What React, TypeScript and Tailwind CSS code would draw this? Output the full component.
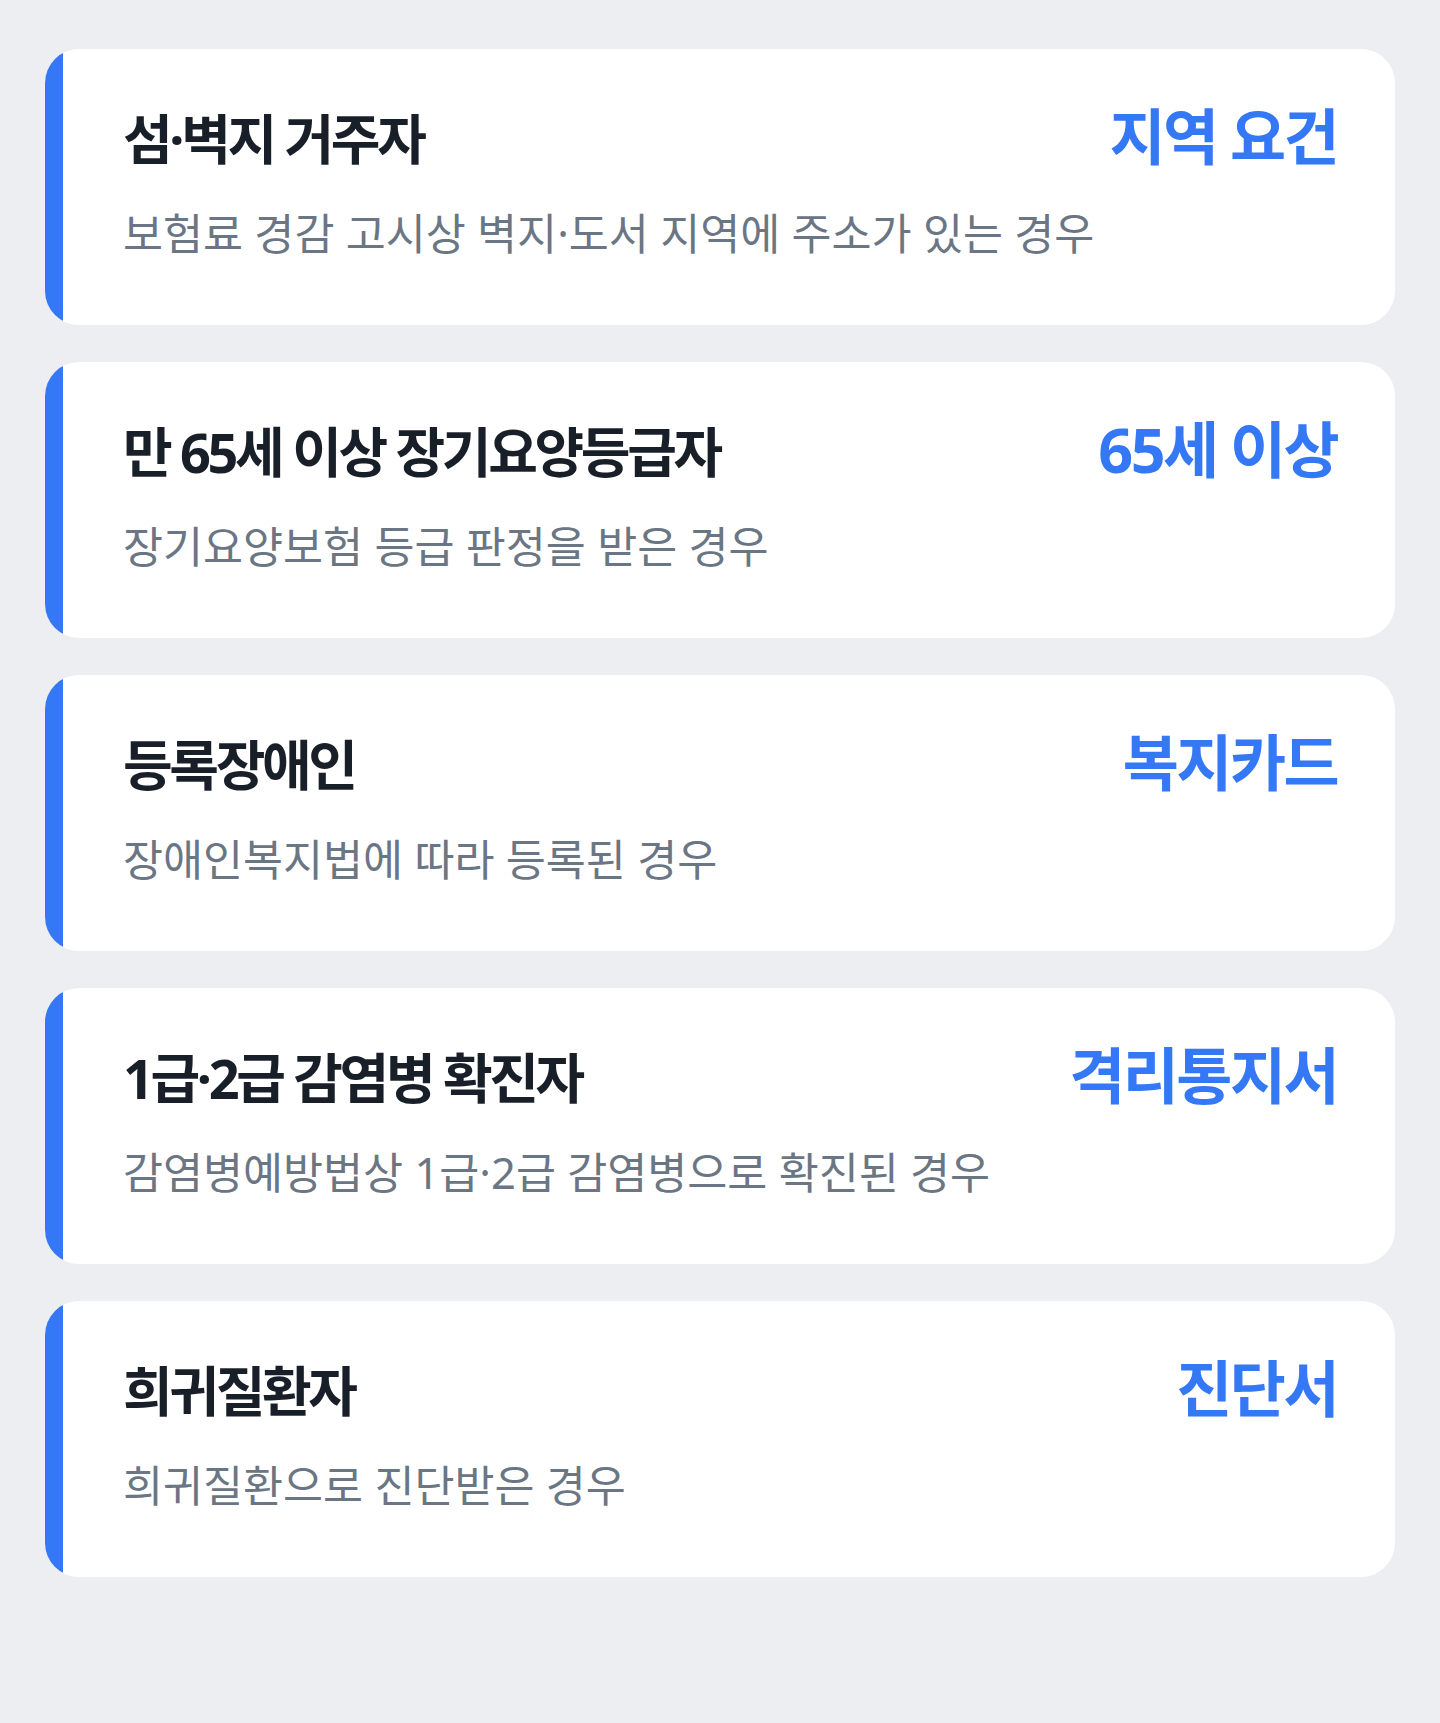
const items = [
  {
    title: "섬·벽지 거주자",
    tag: "지역 요건",
    desc: "보험료 경감 고시상 벽지·도서 지역에 주소가 있는 경우",
  },
  {
    title: "만 65세 이상 장기요양등급자",
    tag: "65세 이상",
    desc: "장기요양보험 등급 판정을 받은 경우",
  },
  {
    title: "등록장애인",
    tag: "복지카드",
    desc: "장애인복지법에 따라 등록된 경우",
  },
  {
    title: "1급·2급 감염병 확진자",
    tag: "격리통지서",
    desc: "감염병예방법상 1급·2급 감염병으로 확진된 경우",
  },
  {
    title: "희귀질환자",
    tag: "진단서",
    desc: "희귀질환으로 진단받은 경우",
  },
];

function EligibilityCard({ title, tag, desc }: { title: string; tag: string; desc: string }) {
  return (
    <div className="flex h-[276px] overflow-hidden rounded-[34px] bg-white">
      {/* Accent bar */}
      <div className="w-[18px] shrink-0 bg-[#3478f6]" aria-hidden />
      <div className="flex flex-1 flex-col justify-center pl-[60px] pr-[58px] pb-[12px]">
        <div className="flex items-baseline justify-between">
          <h3 className="text-[54px] font-bold leading-[64px] tracking-[-0.062em] text-[#191f28]">
            {title}
          </h3>
          <span className="text-[61px] font-bold leading-[64px] tracking-[-0.042em] text-[#3478f6]">
            {tag}
          </span>
        </div>
        <p className="mt-[37px] text-[43.5px] leading-[50px] text-[#6b7684]">{desc}</p>
      </div>
    </div>
  );
}

export default function App() {
  return (
    <div
      className="min-h-screen bg-[#eceef2] px-[45px] pt-[49px] pb-[146px]"
      style={{ fontFamily: '"Noto Sans", "Noto Sans CJK KR", sans-serif' }}
    >
      <div className="flex flex-col gap-[37px]">
        {items.map((item) => (
          <EligibilityCard key={item.title} {...item} />
        ))}
      </div>
    </div>
  );
}
